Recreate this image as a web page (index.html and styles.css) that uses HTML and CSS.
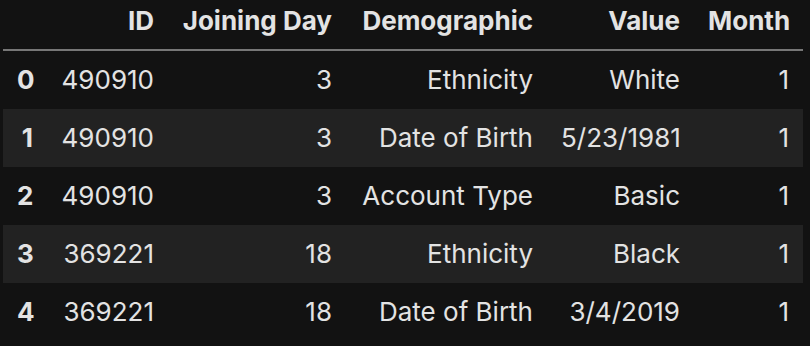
FILE: index.html
```html
<!DOCTYPE html>
<html>
<head>
<meta charset="utf-8">
<link rel="stylesheet" href="styles.css">
</head>
<body>
<table class="df">
  <colgroup>
    <col class="c-idx"><col class="c-id"><col class="c-day"><col class="c-demo"><col class="c-val"><col class="c-month">
  </colgroup>
  <thead>
    <tr><th></th><th>ID</th><th>Joining Day</th><th>Demographic</th><th>Value</th><th>Month</th></tr>
  </thead>
  <tbody>
    <tr><th>0</th><td>490910</td><td>3</td><td>Ethnicity</td><td>White</td><td>1</td></tr>
    <tr><th>1</th><td>490910</td><td>3</td><td>Date of Birth</td><td>5/23/1981</td><td>1</td></tr>
    <tr><th>2</th><td>490910</td><td>3</td><td>Account Type</td><td>Basic</td><td>1</td></tr>
    <tr><th>3</th><td>369221</td><td>18</td><td>Ethnicity</td><td>Black</td><td>1</td></tr>
    <tr><th>4</th><td>369221</td><td>18</td><td>Date of Birth</td><td>3/4/2019</td><td>1</td></tr>
  </tbody>
</table>
</body>
</html>
```
FILE: styles.css
```css
html, body {
  margin: 0;
  padding: 0;
  background: #121212;
}
body {
  overflow: hidden;
  height: 346px;
}
.df {
  margin-left: 3px;
  width: 800px;
  table-layout: fixed;
  border-collapse: collapse;
  font-family: Inter, "Liberation Sans", sans-serif;
  font-size: 26px;
  color: #e3e3e3;
}
.c-idx { width: 44px; }
.c-id { width: 121px; }
.c-day { width: 178px; }
.c-demo { width: 201px; }
.c-val { width: 147px; }
.c-month { width: 109px; }
.df th, .df td {
  text-align: right;
  padding: 0 14px;
  white-space: nowrap;
}
.df th { font-weight: 700; }
.df thead th {
  line-height: 41px;
  padding-bottom: 8px;
  border-bottom: 2px solid #777777;
}
.df tbody td, .df tbody th {
  line-height: 58px;
}
.df tbody td { font-weight: 400; }
.df tbody tr:nth-child(even) { background: #222222; }
```
